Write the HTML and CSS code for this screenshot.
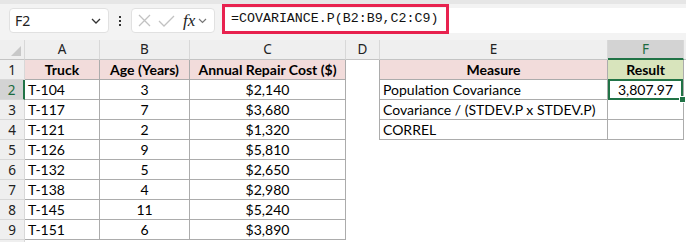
FILE: index.html
```html
<!DOCTYPE html>
<html lang="en">
<head>
  <meta charset="UTF-8">
  <title>Covariance</title>
  <link rel="stylesheet" href="styles.css">
</head>
<body>
  <div class="formula-bar">
    <div class="name-box">
      <span>F2</span>
      <svg class="chev" width="10" height="6" viewBox="0 0 10 6"><path d="M1 1 L5 5 L9 1" fill="none" stroke="#333" stroke-width="1.3"/></svg>
    </div>
    <div class="dots"><i></i><i></i><i></i></div>
    <div class="fx-box">
      <svg width="13" height="13" viewBox="0 0 13 13"><path d="M1 1 L12 12 M12 1 L1 12" stroke="#c2c2c2" stroke-width="1.3" fill="none"/></svg>
      <svg width="17" height="12" viewBox="0 0 17 12"><path d="M1 6 L6 11 L16 1" stroke="#c2c2c2" stroke-width="1.3" fill="none"/></svg>
      <span class="fx">fx</span>
      <svg width="9" height="6" viewBox="0 0 9 6"><path d="M1 1 L4.5 4.5 L8 1" fill="none" stroke="#777" stroke-width="1.2"/></svg>
    </div>
    <div class="formula">
      <span class="formula-text">=COVARIANCE.P(B2:B9,C2:C9)</span>
    </div>
  </div>

  <div class="sheet">
    <!-- cabecera de columnas -->
    <div class="hd corner"></div>
    <div class="hd">A</div>
    <div class="hd">B</div>
    <div class="hd">C</div>
    <div class="hd">D</div>
    <div class="hd">E</div>
    <div class="hd active">F</div>
    <div class="hd"></div>

    <!-- fila 1 -->
    <div class="rh">1</div>
    <div class="cell b th">Truck</div>
    <div class="cell b th">Age (Years)</div>
    <div class="cell b th">Annual Repair Cost ($)</div>
    <div class="cell edge"></div>
    <div class="cell b th">Measure</div>
    <div class="cell b th green">Result</div>
    <div class="cell"></div>

    <!-- fila 2 -->
    <div class="rh active">2</div>
    <div class="cell b">T-104</div>
    <div class="cell b mid">3</div>
    <div class="cell b mid">$2,140</div>
    <div class="cell edge"></div>
    <div class="cell b">Population Covariance</div>
    <div class="cell b mid sel">3,807.97</div>
    <div class="cell"></div>

    <!-- fila 3 -->
    <div class="rh">3</div>
    <div class="cell b">T-117</div>
    <div class="cell b mid">7</div>
    <div class="cell b mid">$3,680</div>
    <div class="cell edge"></div>
    <div class="cell b">Covariance / (STDEV.P x STDEV.P)</div>
    <div class="cell b"></div>
    <div class="cell"></div>

    <!-- fila 4 -->
    <div class="rh">4</div>
    <div class="cell b">T-121</div>
    <div class="cell b mid">2</div>
    <div class="cell b mid">$1,320</div>
    <div class="cell edge"></div>
    <div class="cell b">CORREL</div>
    <div class="cell b"></div>
    <div class="cell"></div>

    <!-- fila 5 -->
    <div class="rh">5</div>
    <div class="cell b">T-126</div>
    <div class="cell b mid">9</div>
    <div class="cell b mid">$5,810</div>
    <div class="cell"></div><div class="cell"></div><div class="cell"></div><div class="cell"></div>

    <!-- fila 6 -->
    <div class="rh">6</div>
    <div class="cell b">T-132</div>
    <div class="cell b mid">5</div>
    <div class="cell b mid">$2,650</div>
    <div class="cell"></div><div class="cell"></div><div class="cell"></div><div class="cell"></div>

    <!-- fila 7 -->
    <div class="rh">7</div>
    <div class="cell b">T-138</div>
    <div class="cell b mid">4</div>
    <div class="cell b mid">$2,980</div>
    <div class="cell"></div><div class="cell"></div><div class="cell"></div><div class="cell"></div>

    <!-- fila 8 -->
    <div class="rh">8</div>
    <div class="cell b">T-145</div>
    <div class="cell b mid">11</div>
    <div class="cell b mid">$5,240</div>
    <div class="cell"></div><div class="cell"></div><div class="cell"></div><div class="cell"></div>

    <!-- fila 9 -->
    <div class="rh">9</div>
    <div class="cell b">T-151</div>
    <div class="cell b mid">6</div>
    <div class="cell b mid">$3,890</div>
    <div class="cell"></div><div class="cell"></div><div class="cell"></div><div class="cell"></div>

    <!-- fila 10, solo asoma el borde -->
    <div class="rh"></div>
    <div class="cell"></div><div class="cell"></div><div class="cell"></div>
    <div class="cell"></div><div class="cell"></div><div class="cell"></div><div class="cell"></div>
  </div>
</body>
</html>
```

FILE: styles.css
```css
body {
  margin: 0;
  padding: 0;
  width: 686px;
  height: 242px;
  overflow: hidden;
  background-color: white;
  font-family: 'Lato', 'Liberation Sans', sans-serif;
}

/* Barra de fórmulas */
.formula-bar {
  height: 40px;
  box-sizing: border-box;
  background-color: #f3f3f3;
  border-top: 4px solid #e6e6e6;
  display: flex;
  align-items: flex-start;
  padding: 4px 0 0 9px;
}

.name-box {
  width: 100px;
  height: 25px;
  box-sizing: border-box;
  background-color: white;
  border: 1px solid #e1e1e1;
  border-radius: 4px;
  display: flex;
  align-items: center;
  justify-content: space-between;
  padding: 0 7px 0 5px;
  font-family: 'Noto Sans', sans-serif;
  font-size: 14px;
  color: #222;
}

.dots {
  width: 22px;
  height: 25px;
  display: flex;
  flex-direction: column;
  align-items: center;
  justify-content: center;
  gap: 2px;
}

.dots i {
  width: 2px;
  height: 2px;
  background-color: #333;
}

.fx-box {
  width: 84px;
  height: 25px;
  box-sizing: border-box;
  background-color: white;
  border: 1px solid #e1e1e1;
  border-radius: 4px;
  display: flex;
  align-items: center;
  padding: 0 4px 0 6px;
  gap: 7px;
}

.fx {
  font-family: 'Liberation Serif', serif;
  font-style: italic;
  font-size: 17px;
  color: #222;
  margin-left: 1px;
  margin-right: -4px;
  line-height: 1;
}

.formula {
  flex: 1;
  height: 25px;
  margin-left: 7px;
  background-color: white;
  border-radius: 4px 0 0 4px;
  display: flex;
  align-items: flex-start;
}

.formula-text {
  width: 227px;
  height: 30px;
  box-sizing: border-box;
  margin-top: -4px;
  border: 3px solid #e8224f;
  padding-left: 6px;
  font-family: 'Liberation Mono', monospace;
  font-size: 13.3px;
  line-height: 24px;
  color: #111;
}

/* Hoja */
.sheet {
  display: grid;
  grid-template-columns: 25px 75px 90px 156px 34px 228px 76px 1fr;
  grid-auto-rows: 20px;
}

.hd {
  background-color: #efefef;
  border-right: 1px solid #d8d8d8;
  border-bottom: 1px solid #c4c4c4;
  box-sizing: border-box;
  text-align: center;
  font-family: 'Noto Sans', sans-serif;
  font-size: 13.5px;
  line-height: 19px;
  color: #222;
}

.hd.active {
  background-color: #d3d3d3;
  border-bottom: 2px solid #217346;
  color: #1c6b40;
}

.corner {
  position: relative;
}

.corner::after {
  content: '';
  position: absolute;
  right: 3px;
  bottom: 3px;
  border-left: 10px solid transparent;
  border-bottom: 10px solid #c8c8c8;
}

.rh {
  background-color: #efefef;
  border-right: 1px solid #d8d8d8;
  border-bottom: 1px solid #d8d8d8;
  box-sizing: border-box;
  text-align: center;
  font-family: 'Noto Sans', sans-serif;
  font-size: 13.5px;
  line-height: 20px;
  color: #222;
}

.rh.active {
  background-color: #d3d3d3;
  border-right: 2px solid #217346;
  color: #1c6b40;
}

.cell {
  box-sizing: border-box;
  padding: 0 3px;
  font-size: 14px;
  line-height: 20px;
  color: #000;
  white-space: nowrap;
  overflow: visible;
}

.cell.b {
  border-right: 1px solid #acacac;
  border-bottom: 1px solid #acacac;
}

.cell.edge {
  border-right: 1px solid #acacac;
}

.mid {
  text-align: center;
}

.th {
  background-color: #f2dcdb;
  font-weight: bold;
  text-align: center;
}

.th.green {
  background-color: #d8e4bc;
}

/* Celda seleccionada */
.sel {
  position: relative;
}

.sel::before {
  content: '';
  position: absolute;
  top: -1px;
  left: 0;
  right: 0;
  bottom: -1px;
  border: 2px solid #217346;
}

.sel::after {
  content: '';
  position: absolute;
  right: -3px;
  bottom: -4px;
  width: 5px;
  height: 5px;
  background-color: #217346;
  border: 1px solid white;
}
```
